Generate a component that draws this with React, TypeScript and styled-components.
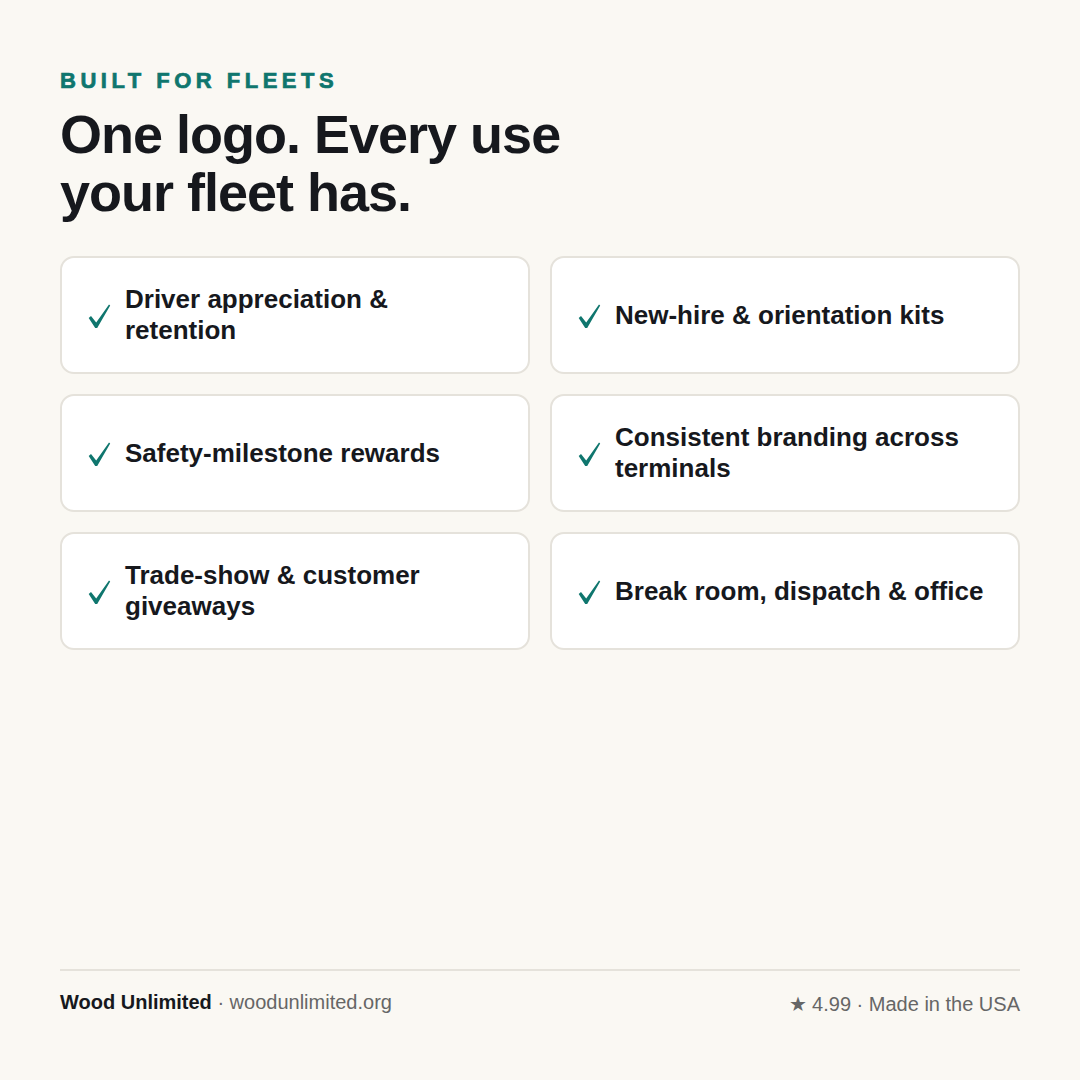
import styled, { createGlobalStyle } from "styled-components";

const GlobalStyle = createGlobalStyle`
  html, body {
    margin: 0;
    padding: 0;
    background: #faf8f3;
  }
  body {
    font-family: "Liberation Sans", Arial, sans-serif;
  }
`;

const Page = styled.div`
  width: 1080px;
  height: 1080px;
  box-sizing: border-box;
  padding: 68px 60px 60px;
  display: flex;
  flex-direction: column;
  background: #faf8f3;
`;

const Eyebrow = styled.div`
  color: #0f766e;
  font-size: 22px;
  line-height: 25px;
  font-weight: 800;
  letter-spacing: 4.5px;
  -webkit-text-stroke: 0.7px #0f766e;
  margin-bottom: 12px;
`;

const Title = styled.h1`
  margin: 0 0 35px;
  color: #16181d;
  font-size: 54px;
  line-height: 58px;
  font-weight: 700;
  letter-spacing: -1px;
`;

const Grid = styled.div`
  display: grid;
  grid-template-columns: 1fr 1fr;
  gap: 20px;
`;

const Card = styled.div`
  height: 118px;
  box-sizing: border-box;
  display: flex;
  align-items: center;
  gap: 12px;
  padding: 0 24px;
  background: #fff;
  border: 2px solid #e5e2db;
  border-radius: 14px;
`;

const CheckIcon = styled.svg`
  flex: none;
  width: 27px;
  height: 26px;
  fill: #0f766e;
`;

const CardText = styled.div`
  color: #16181d;
  font-size: 26px;
  line-height: 31px;
  font-weight: 700;
`;

const Footer = styled.div`
  margin-top: auto;
  padding-top: 18px;
  border-top: 2px solid #e5e2db;
  display: flex;
  justify-content: space-between;
  align-items: flex-start;
  color: #666666;
  font-size: 20px;
  line-height: 26px;
`;

const Brand = styled.b`
  color: #16181d;
`;

const Rating = styled.span`
  line-height: 31px;
`;

const items = [
  "Driver appreciation & retention",
  "New-hire & orientation kits",
  "Safety-milestone rewards",
  "Consistent branding across terminals",
  "Trade-show & customer giveaways",
  "Break room, dispatch & office",
];

export default function App() {
  return (
    <Page>
      <GlobalStyle />
      <Eyebrow>BUILT FOR FLEETS</Eyebrow>
      <Title>
        One logo. Every use
        <br />
        your fleet has.
      </Title>
      <Grid>
        {items.map((item) => (
          <Card key={item}>
            <CheckIcon viewBox="0 0 27 26">
              <path d="M2.7 16 L5 14 L10.2 20.5 L23 2.6 L24.2 3.4 L11.2 26 L9.2 26 Z" />
            </CheckIcon>
            <CardText>{item}</CardText>
          </Card>
        ))}
      </Grid>
      <Footer>
        <span>
          <Brand>Wood Unlimited</Brand> · woodunlimited.org
        </span>
        <Rating>★ 4.99 · Made in the USA</Rating>
      </Footer>
    </Page>
  );
}
